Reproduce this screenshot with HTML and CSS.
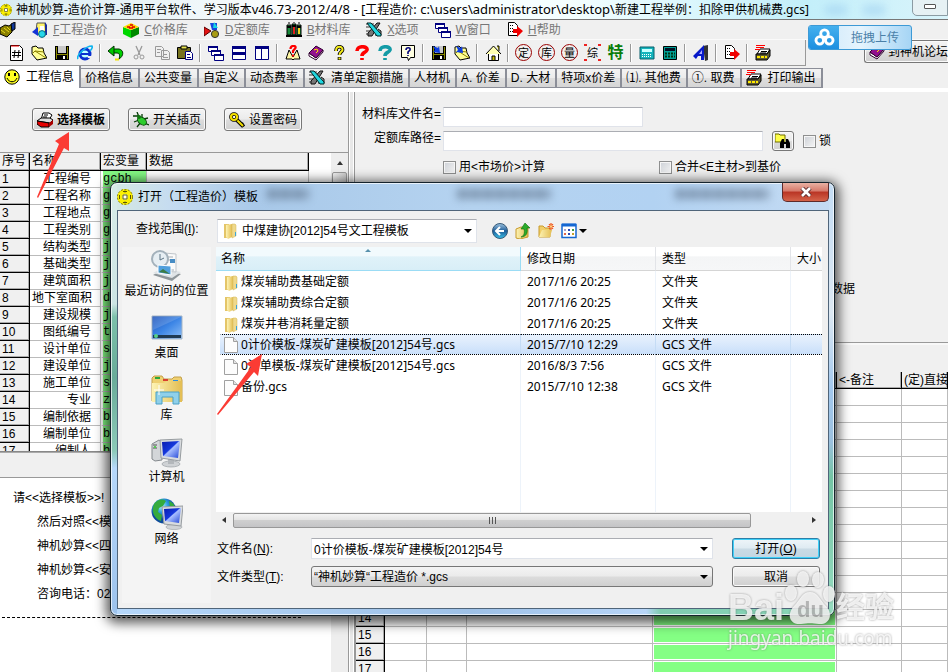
FILE: index.html
```html
<!DOCTYPE html>
<html lang="zh-CN">
<head>
<meta charset="utf-8">
<title>神机妙算-造价计算</title>
<link rel="stylesheet" href="styles.css">
</head>
<body>
<svg class="sprite" aria-hidden="true">
  <defs>
    <linearGradient id="gf" x1="0" x2="1"><stop offset="0" stop-color="#fdf3b4"/><stop offset="1" stop-color="#e3bd52"/></linearGradient>
    <linearGradient id="gs" x1="0" x2="1" y2="1"><stop offset="0" stop-color="#0a1cae"/><stop offset=".45" stop-color="#1538dc"/><stop offset=".5" stop-color="#a9bfff"/><stop offset="1" stop-color="#2346d6"/></linearGradient>
    <linearGradient id="gd" x1="0" x2="1" y2="1"><stop offset="0" stop-color="#1b50b8"/><stop offset=".5" stop-color="#3d86e6"/><stop offset="1" stop-color="#8fc0f7"/></linearGradient>
    <radialGradient id="gg" cx=".4" cy=".3"><stop offset="0" stop-color="#b6f4ff"/><stop offset=".5" stop-color="#2b9fe0"/><stop offset="1" stop-color="#0c4a9c"/></radialGradient>
    <linearGradient id="gb" y2="1" x2="0"><stop offset="0" stop-color="#9fc4e0"/><stop offset=".5" stop-color="#1d5c98"/><stop offset="1" stop-color="#39c0e6"/></linearGradient>
  </defs>
  <symbol id="coin" viewBox="0 0 16 16"><circle cx="8" cy="8" r="5.4" fill="none" stroke="#fbf000" stroke-width="5"/><circle cx="8" cy="8" r="7.6" fill="none" stroke="#5f5a00" stroke-width=".8" stroke-dasharray="2 1.5"/><path d="M6 6h4v4H6z" fill="#fff" stroke="#6b6500"/><path d="M6 2.500h4M8 1.500v2M6 13.500h4M8 12.500v2M2.500 6v4M13.500 6v4" stroke="#5d5900"/></symbol>
  <symbol id="shake" viewBox="0 0 16 16"><path d="M0 6l5-3 4 1 3-2v8l-5 5-7-3z" fill="#8a8000" stroke="#000"/><path d="M11 2l4-2v7l-3 2z" fill="#123a9b" stroke="#000"/><path d="M1 8l4 3M4 6l5 4M7 5l3 3" stroke="#e8d91c"/></symbol>
  <symbol id="proj" viewBox="0 0 16 16"><path d="M5 1h8l1 12H7l-3-4z" fill="#fff36b" stroke="#555"/><path d="M8 4h4v6H8z" fill="#fff"/><path d="M0 10l6-5v9z" fill="#1533d6"/><path d="M13 0l2 3v10h-2z" fill="#1c2e9c"/><circle cx="10" cy="12" r="3.4" fill="#27d7e8" stroke="#0b6a80"/></symbol>
  <symbol id="cube" viewBox="0 0 16 16"><path d="M0 5l8 3v8l-8-4z" fill="#00d800"/><path d="M16 5L8 8v8l8-4z" fill="#008a00"/><path d="M0 5l8-4 8 4-8 3z" fill="#ffd800"/><path d="M4 5h3M9 5h3M7 3h3M6 6h4" stroke="#e00000" stroke-width="1.6"/></symbol>
  <symbol id="shapes" viewBox="0 0 16 16"><path d="M0 5l7 4-7 5z" fill="#e31212" stroke="#500"/><path d="M6 1h7v7H8z" fill="#1747e0"/><path d="M10 0l4 6h-5z" fill="#15d6e0"/><circle cx="11" cy="12" r="3.6" fill="#a79b13" stroke="#333"/></symbol>
  <symbol id="books" viewBox="0 0 16 16"><path d="M1 3h4v10H1zM6 2h4v11H6zM11 3h4v10h-4z" stroke="#000" fill="#178a3a"/><path d="M7 3h2v9H7z" fill="#e51c1c"/><path d="M12 4h2v8h-2z" fill="#f0d020"/><path d="M1 5h4M6 4h4M11 5h4M0 14h16" stroke="#000" stroke-width="2"/><path d="M2 1h2M7 0h2M12 1h2" stroke="#000"/></symbol>
  <symbol id="excel" viewBox="0 0 16 16"><path d="M0 2h8M0 5h5M0 9h4M0 12h3" stroke="#333"/><path d="M14 1h-3L2 11v3h4z" fill="#777" stroke="#111"/><path d="M9 13h6V9l-3-2" fill="#999" stroke="#111"/><path d="M1 1h4l10 11v2h-4z" fill="#20d6df" stroke="#022"/></symbol>
  <symbol id="wins" viewBox="0 0 16 16"><g fill="#fff" stroke="#000080"><path d="M.5 1.500h9v5h-9zM3.500 5.500h9v5h-9zM6.500 9.500h9v6h-9z"/><path d="M0 2h10M3 6h10M6 10h10" stroke-width="2"/></g></symbol>
  <symbol id="exit" viewBox="0 0 16 16"><path d="M1.500.5h6l3 3v10h-9z" fill="#fff" stroke="#000"/><path d="M3 3.500h3M3 6.500h3M3 9.500h4" stroke="#000" stroke-dasharray="1 1"/><path d="M6 7h4V4l6 5-6 6v-4H6z" fill="#f00000"/></symbol>
  <symbol id="new" viewBox="0 0 16 16"><path d="M2.500.5h9l3 3v12h-12z" fill="#fff" stroke="#000"/><path d="M3 1h8" stroke="red"/><path d="M7 5L6 13M11 5l-1 8M4 7.500h9M4 10.500h9" stroke="#000"/></symbol>
  <symbol id="open" viewBox="0 0 16 16"><path d="M1 2l4-1 2 2h5l1 5 3 5-10 2-5-6z" fill="#ffff95" stroke="#000"/><path d="M2 8l2-2 11 7M4 6l9 1" fill="none" stroke="#8b8200"/></symbol>
  <symbol id="save" viewBox="0 0 16 16"><path d="M1 1h14v14H1z" fill="#000"/><path d="M2 2h1v12H2zM13 2h1v12h-1z" fill="#8b8a00"/><path d="M4 1h8v7H4z" fill="#c8c8c8"/><path d="M3 9h10v1H3z" fill="#8b8a00"/><path d="M9 11h2v3H9z" fill="#fff"/></symbol>
  <symbol id="ie" viewBox="0 0 16 16"><circle cx="8" cy="9" r="5" fill="#bff" stroke="#0a2fd0" stroke-width="3"/><path d="M4 9h9" stroke="#0a2fd0" stroke-width="2"/><path d="M1 14C-1 11 8 1 15 1c1 2-1 4-2 5" fill="none" stroke="#0fb4ee" stroke-width="1.600"/><path d="M10 11h6v2h-5z" fill="#efefef"/></symbol>
  <symbol id="undo" viewBox="0 0 16 16"><path d="M4 4h7c5 1 5 7 0 10 1-3 1-6-2-6H4" fill="#00d000" stroke="#003000"/><path d="M0 6l6-5v10z" fill="#00c800" stroke="#003000"/><path d="M7 14.500h4" stroke="#f2e200" stroke-width="2"/></symbol>
  <symbol id="cut" viewBox="0 0 16 16"><path d="M5 1l4 9M11 1L7 10" stroke="#999" stroke-width="1.300"/><circle cx="5" cy="12" r="2" fill="none" stroke="#999"/><circle cx="11" cy="12" r="2" fill="none" stroke="#999"/></symbol>
  <symbol id="copy" viewBox="0 0 16 16"><path d="M1.500 1.500h6l2 2v8h-8zM7.500 5.500h6l2 2v7h-8z" fill="#f0f0f0" stroke="#999"/><path d="M3 4.500h4M3 7.500h3M9 9.500h4M9 12.500h5" stroke="#999"/></symbol>
  <symbol id="paste" viewBox="0 0 16 16"><path d="M.5 2.500h13v11H.5z" fill="#77731e" stroke="#000"/><path d="M4 1h6v3H4z" fill="#e9e54f" stroke="#000"/><path d="M8.500 6.500h5l2 2v6h-7z" fill="#fff" stroke="#000080"/><path d="M10 9.500h3M10 12.500h4" stroke="#000080"/></symbol>
  <symbol id="hor" viewBox="0 0 16 16"><path d="M1.500 1.500h13v13h-13z" fill="#fff" stroke="#000080"/><path d="M1 2.500h14M1 8.500h14" stroke="#000080" stroke-width="3"/></symbol>
  <symbol id="ver" viewBox="0 0 16 16"><path d="M1.500 1.500h13v13h-13zM7.500 1v13" fill="#fff" stroke="#000080"/><path d="M1 2.500h14" stroke="#000080" stroke-width="3"/></symbol>
  <symbol id="bookq" viewBox="0 0 16 16"><path d="M1 14L4 5l4 7 4-7 3 9H9l-1 1-1-1z" fill="#fff7a5" stroke="#000"/><path d="M5.500 4c0-4 6-4 5-1L8 6v2M8 9.500v2" fill="none" stroke="#f00" stroke-width="2.200"/></symbol>
  <symbol id="pbook" viewBox="0 0 16 16"><path d="M1 8v3l7 4 7-8V5l-7 8z" fill="#fff" stroke="#300030"/><path d="M1 8l7-7 7 4-7 8z" fill="#93108e" stroke="#300030"/><path d="M6 5l3-1 1 2-2 2" stroke="#ffe600" fill="none"/></symbol>
  <symbol id="q" viewBox="0 0 16 16"><path d="M5 6c0-6 7-5 6.500-1-.5 2-3 2-3 5M8.500 12v3" fill="none" stroke="#000" stroke-width="3.600"/><path d="M5 6c0-6 7-5 6.500-1-.5 2-3 2-3 5M8.500 12.500v2" fill="none" stroke="currentColor" stroke-width="2"/></symbol>
  <symbol id="qbig" viewBox="0 0 16 16"><path d="M3 6c0-6 11-5 10-1-1 3-5 2-5 6M8 13v2" fill="none" stroke="currentColor" stroke-width="3.600"/></symbol>
  <symbol id="qbox" viewBox="0 0 16 16"><path d="M1.500.5h13v12h-4l-2 3-1-3h-6z" fill="#ffffe1" stroke="#000"/><path d="M6 5c0-3 5-3 4 0L8 7v2M8 10v1" fill="none" stroke="#00007a" stroke-width="1.600"/></symbol>
  <symbol id="down" viewBox="0 0 16 16"><path d="M2 1l5 2 1-2 1 7-7-1 2-2z" fill="#0d3de0"/></symbol>
  <symbol id="home" viewBox="0 0 16 16"><path d="M3.500 8v7.500h10V8" fill="#fff" stroke="#000"/><path d="M1 9l7.500-8L16 9" fill="#ffffb0" stroke="#000"/><path d="M12 1h2v5M7 15v-4h3v4" fill="#cfc500" stroke="#000"/></symbol>
  <symbol id="cd" viewBox="0 0 16 16"><path d="M1 2h14v12H1z" fill="#14b4bc" stroke="#065f6a"/><path d="M3 4h10v3H3z" fill="#c6ffff"/><path d="M3 9.500h10M3 11.500h10" stroke="#fff" stroke-dasharray="1 1"/></symbol>
  <symbol id="calc" viewBox="0 0 16 16"><path d="M1.500 1.500h13v13h-13z" fill="#00a097" stroke="#000"/><path d="M3 3h10v3H3z" fill="#012"/><path d="M3 8.500h10M3 11.500h10" stroke="#031" stroke-width="2" stroke-dasharray="2 1"/></symbol>
  <symbol id="ltr" viewBox="0 0 16 16"><path d="M10 1l5-1v15l-3 1z" fill="#333"/><path d="M0 11L11 0v15H8v-4H5l-2 3z" fill="#0719c9"/><path d="M6 9l3-4v4z" fill="#aaf"/></symbol>
  <symbol id="print" viewBox="0 0 16 16"><path d="M5 4h10l-3 5H2z" fill="#fff" stroke="#000"/><path d="M1 9h11l3-4v6l-3 4H1z" fill="#5d5936" stroke="#000"/><path d="M2 12h10" stroke="#ffe900" stroke-width="2" stroke-dasharray="3 1"/><path d="M1 .5h9M1 2.500h8M0 4.500h5" stroke="#f00"/><path d="M6 6.500h6M5 8h6" stroke="#000"/></symbol>
  <symbol id="smile" viewBox="0 0 16 16"><circle cx="8" cy="8" r="7.200" fill="#ffff22" stroke="#000"/><path d="M5 4v3M11 4v3" stroke="#000" stroke-width="2"/><path d="M3 9c2 5 8 5 10 0" fill="none" stroke="#000"/></symbol>
  <symbol id="redp" viewBox="0 0 16 16"><path d="M6 1h6l3 2-3 5H4z" fill="#fff" stroke="#000"/><path d="M0 9l4-3h9l3 2-3 3z" fill="#ddd" stroke="#000"/><path d="M0 9l12 2v4H4l-4-3z" fill="#e60000" stroke="#000"/><path d="M12 11l4-3v4l-4 3z" fill="#a00"/><path d="M7 3h4M6 5h4" stroke="#000"/></symbol>
  <symbol id="bug" viewBox="0 0 16 16"><path d="M0 4h5l2 3M4 0l2 5M9 2v4M15 6l-4 1M1 10l5-2M4 15l4-5M16 13l-5-2" stroke="#063b06" stroke-width="1.300" fill="none"/><ellipse cx="9" cy="9" rx="5" ry="3.400" transform="rotate(40 9 9)" fill="#2ccc2c" stroke="#064a06"/><circle cx="6" cy="5" r="2" fill="#117711"/></symbol>
  <symbol id="key" viewBox="0 0 16 16"><path d="M7 7l7 7M10 12l2-2M12 14l3-2" stroke="#000" stroke-width="4"/><path d="M7 7l7 7" stroke="#f4df00" stroke-width="2"/><circle cx="5" cy="5" r="3" fill="#fff" stroke="#000" stroke-width="3.600"/><circle cx="5" cy="5" r="3" fill="none" stroke="#f4df00" stroke-width="2.200"/></symbol>
  <symbol id="bino" viewBox="0 0 16 16"><path d="M0 1h4l1 1h5v7H0z" fill="#ffff4a" stroke="#6d6a00"/><path d="M5 15v-5l2-4h2v3h2V6h2l2 4v5h-4v-4h-2v4z" fill="#000"/></symbol>
  <symbol id="folder" viewBox="0 0 16 16"><path d="M2 1h5v14H2z" fill="#e4c568"/><path d="M4 2l6-1v13l-4 2-2-2z" fill="url(#gf)"/><path d="M10 1h3l1 1v11l-4 2z" fill="#efd98c" stroke="#d3b455" stroke-width=".5"/><path d="M13 9h1v4h-1z" fill="#3aa4d8"/></symbol>
  <symbol id="doc" viewBox="0 0 16 16"><path d="M1.500.5h9l4 4v11h-13z" fill="#fcfcfc" stroke="#a0a0a0"/><path d="M10.500.5v4h4" fill="#e3e3e3" stroke="#a0a0a0"/></symbol>
  <symbol id="back" viewBox="0 0 16 16"><circle cx="8" cy="8" r="7.500" fill="url(#gb)" stroke="#375a78"/><path d="M12 8H5M8 4L4 8l4 4" fill="none" stroke="#fff" stroke-width="2"/></symbol>
  <symbol id="up" viewBox="0 0 16 16"><path d="M1 6l5-2 7 1v9l-8 2-4-1z" fill="url(#gf)" stroke="#c89b2d"/><path d="M6 14c3-1 4-4 3-8H6l4-6 5 5h-3c1 5-1 9-6 9z" fill="#2cab2c" stroke="#0b6e0b" stroke-width=".6"/></symbol>
  <symbol id="nf" viewBox="0 0 16 16"><path d="M1 3h4l2 2h5v9H1z" fill="#f1cf69" stroke="#c89b2d"/><path d="M1 14l3-7h10l-2 7z" fill="url(#gf)"/><path d="M13 0v7M9.500 3.500h6.500M11 1l4 5M15 1l-4 5" stroke="#ef5418" stroke-width="1.200"/><circle cx="13" cy="3.500" r="1.200" fill="#ffd080"/></symbol>
  <symbol id="view" viewBox="0 0 16 16"><path d="M1 1.500h14v13H1z" fill="#fff" stroke="#1467d2" stroke-width="1.500"/><path d="M1 2h14" stroke="#1467d2" stroke-width="3"/><path d="M3 7h2" stroke="#a99fc8" stroke-width="2"/><path d="M3 11h2" stroke="#e2694a" stroke-width="2"/><path d="M7 7h2M7 11h2" stroke="#2a49b5" stroke-width="2"/><path d="M11 7h2" stroke="#3b9a42" stroke-width="2"/><path d="M11 11h2" stroke="#c6a02a" stroke-width="2"/></symbol>
  <symbol id="p-recent" viewBox="0 0 32 32"><path d="M2 25l9-5 19 4-9 7z" fill="#8d9599"/><path d="M2 23l9-5 19 4-9 6z" fill="#dfe4e7"/><path d="M13 3l12 1v18l-12-1z" fill="#fafafa" stroke="#bfc5ca"/><path d="M15 7h7M15 10h4M15 20h8" stroke="#a3adb5"/><path d="M19 9h5v4h-5z" fill="#478cc4"/><circle cx="9" cy="9" r="8" fill="#e6eef3" stroke="#a3b1bb" stroke-width="2"/><path d="M9 4v6l4-2" fill="none" stroke="#5c7485"/><path d="M7 15l13 1v9L7 23z" fill="#4f9fdd" stroke="#fff"/><path d="M8 22l4-3 7 5z" fill="#3b7c46"/></symbol>
  <symbol id="p-desk" viewBox="0 0 32 32"><path d="M1 4h30v23H1z" fill="url(#gd)" stroke="#a6b5c4"/><path d="M2 23h28v3H2z" fill="#203a52"/><circle cx="5" cy="24" r="2" fill="#55d08a"/><path d="M2 5h28L2 18z" fill="#fff" opacity=".15"/></symbol>
  <symbol id="p-lib" viewBox="0 0 32 32"><path d="M1 4l2-2h8l2 3h8l2-2h7l1 3v21H1z" fill="#efd071" stroke="#c4a04a"/><path d="M4 3h5v2H4z" fill="#2ca83b"/><path d="M12 5h5v2h-5z" fill="#d8402f"/><path d="M22 6h5v2h-5z" fill="#2c8de0"/><path d="M1 9h12l3-2h15v21H1z" fill="url(#gf)"/><path d="M5 30V18h23v12h-6v-7H11v7z" fill="#8fd0ea" stroke="#4ba0c6"/><path d="M8 11v10M3 16h10" stroke="#fff"/></symbol>
  <symbol id="p-comp" viewBox="0 0 32 32"><path d="M1 8l7-4 3 2v18l-7 1-3-2z" fill="#d3d6d9" stroke="#84898d"/><path d="M2 9h4M2 12h4" stroke="#555"/><path d="M3 10h2v2H3z" fill="#5c5"/><ellipse cx="20" cy="28" rx="9" ry="3" fill="#cfd2d5" stroke="#9a9fa3" stroke-width=".7"/><path d="M17 22h6v6h-6z" fill="#b3b7bb"/><path d="M9 4l22-1-2 22-19-3z" fill="#d9dcdf" stroke="#979ca0"/><path d="M11 6l18-1-2 17-15-2z" fill="url(#gs)"/></symbol>
  <symbol id="p-net" viewBox="0 0 32 32"><circle cx="13" cy="13" r="12.500" fill="url(#gg)"/><path d="M3 6c4-6 10-5 12-3l-3 5-4 2-1 4 4 3-1 6C3 21 0 13 3 6zM18 3c5 2 6 5 6 7l-5-1z" fill="#35ab3d"/><ellipse cx="23" cy="29" rx="8" ry="2.600" fill="#d0d3d6" stroke="#9a9fa3" stroke-width=".6"/><path d="M11 9l21-1-2 20-17-2z" fill="#d9dcdf" stroke="#979ca0"/><path d="M13 11l17-1-2 15-14-2z" fill="url(#gs)"/></symbol>
</svg>

<div class="app">
  <header class="titlebar">
    <svg class="ic"><use href="#coin"/></svg>
    <h1>神机妙算-造价计算-通用平台软件、学习版本<span class="latin">v46.73-2012/4/8 - [</span>工程造价<span class="latin">: c:\users\administrator\desktop\</span>新建工程举例：扣除甲供机械费.gcs]</h1>
    <span class="haze"></span>
    <button class="minimize" aria-label="最小化"><span></span></button>
  </header>

  <nav class="menubar">
    <svg class="ic lead"><use href="#shake"/></svg>
    <a href="#"><svg class="ic"><use href="#proj"/></svg><span><u>F</u>工程造价</span></a>
    <a href="#"><svg class="ic"><use href="#cube"/></svg><span><u>C</u>价格库</span></a>
    <a href="#"><svg class="ic"><use href="#shapes"/></svg><span><u>D</u>定额库</span></a>
    <a href="#"><svg class="ic"><use href="#books"/></svg><span><u>B</u>材料库</span></a>
    <a href="#"><svg class="ic"><use href="#excel"/></svg><span><u>X</u>选项</span></a>
    <a href="#"><svg class="ic"><use href="#wins"/></svg><span><u>W</u>窗口</span></a>
    <a href="#"><svg class="ic"><use href="#exit"/></svg><span><u>H</u>帮助</span></a>
  </nav>

  <div class="toolrow">
    <div class="toolbar">
      <button aria-label="新建"><svg class="ic"><use href="#new"/></svg></button>
      <button aria-label="打开"><svg class="ic"><use href="#open"/></svg></button>
      <button aria-label="保存"><svg class="ic"><use href="#save"/></svg></button>
      <button aria-label="网络"><svg class="ic"><use href="#ie"/></svg></button>
      <i></i>
      <button aria-label="撤销"><svg class="ic"><use href="#undo"/></svg></button>
      <button aria-label="剪切"><svg class="ic"><use href="#cut"/></svg></button>
      <button aria-label="复制"><svg class="ic"><use href="#copy"/></svg></button>
      <button aria-label="粘贴"><svg class="ic"><use href="#paste"/></svg></button>
      <i></i>
      <button aria-label="层叠"><svg class="ic"><use href="#wins"/></svg></button>
      <button aria-label="横排"><svg class="ic"><use href="#hor"/></svg></button>
      <button aria-label="竖排"><svg class="ic"><use href="#ver"/></svg></button>
      <i></i>
      <button aria-label="教程"><svg class="ic"><use href="#bookq"/></svg></button>
      <button aria-label="手册"><svg class="ic"><use href="#pbook"/></svg></button>
      <button aria-label="提示" class="yellow"><svg class="ic"><use href="#q"/></svg></button>
      <button aria-label="疑问" class="red"><svg class="ic"><use href="#qbig"/></svg></button>
      <button aria-label="问答" class="teal"><svg class="ic"><use href="#qbig"/></svg></button>
      <button aria-label="说明"><svg class="ic"><use href="#qbox"/></svg></button>
      <i></i>
      <button aria-label="存入"><svg class="ic"><use href="#save"/><use href="#down"/></svg></button>
      <button aria-label="取出"><svg class="ic"><use href="#open"/><use href="#down"/></svg></button>
      <i></i>
      <button aria-label="主页"><svg class="ic"><use href="#home"/></svg></button>
      <i></i>
      <button class="seal">定</button>
      <button class="seal">库</button>
      <button class="seal">量</button>
      <button class="seal corners">综</button>
      <button class="seal green">特</button>
      <i></i>
      <button aria-label="计算"><svg class="ic"><use href="#cd"/></svg></button>
      <button aria-label="计算器"><svg class="ic"><use href="#calc"/></svg></button>
      <i></i>
      <button aria-label="字体"><svg class="ic"><use href="#ltr"/></svg></button>
      <i></i>
      <button aria-label="退出"><svg class="ic"><use href="#exit"/></svg></button>
      <i></i>
      <button aria-label="打印"><svg class="ic"><use href="#print"/></svg></button>
    </div>
    <button class="btn forum"><svg class="ic"><use href="#pbook"/></svg>到神机论坛</button>
  </div>

  <nav class="tabs">
    <button class="active"><svg class="ic"><use href="#smile"/></svg>工程信息</button>
    <button>价格信息</button>
    <button>公共变量</button>
    <button>自定义</button>
    <button>动态费率</button>
    <button><svg class="ic"><use href="#excel"/></svg>清单定额措施</button>
    <button>人材机</button>
    <button>A. 价差</button>
    <button>D. 大材</button>
    <button>特项x价差</button>
    <button>⑴. 其他费</button>
    <button>①. 取费</button>
    <button><svg class="ic"><use href="#print"/></svg>打印输出</button>
  </nav>

  <main class="work">
    <section class="left">
      <div class="actions">
        <button class="btn strong"><svg class="ic"><use href="#redp"/></svg>选择模板</button>
        <button class="btn"><svg class="ic"><use href="#bug"/></svg>开关插页</button>
        <button class="btn"><svg class="ic"><use href="#key"/></svg>设置密码</button>
      </div>
      <div class="infobox">
        <table class="info">
          <thead><tr><th class="c1">序号</th><th class="c2">名称</th><th class="c3">宏变量</th><th class="c4">数据</th></tr></thead>
          <tbody id="info-rows"></tbody>
        </table>
        <div class="vbar"><span class="caret-up"></span><span class="thumb"></span></div>
      </div>
      <div class="gap"></div>
      <div class="notes">
        <div class="lines">
          <p>请&lt;&lt;选择模板&gt;&gt;!</p>
          <p class="in">然后对照&lt;&lt;模</p>
          <p class="in">神机妙算&lt;&lt;四</p>
          <p class="in">神机妙算&lt;&lt;安</p>
          <p class="in">咨询电话：02</p>
          <div class="rule"></div>
        </div>
        <div class="track"></div>
      </div>
    </section>
    <div class="splitter"></div>
    <section class="right">
      <form class="settings">
        <div class="row"><label for="lib">材料库文件名=</label><input id="lib" class="short" type="text"></div>
        <div class="row"><label for="path">定额库路径=</label><input id="path" class="long" type="text"><button type="button" class="btn find" aria-label="查找"><svg class="ic"><use href="#bino"/></svg></button><span class="check"><input id="lock" type="checkbox"><label for="lock">锁</label></span></div>
        <div class="row checks"><span class="check"><input id="mk" type="checkbox"><label for="mk">用&lt;市场价&gt;计算</label></span><span class="check"><input id="zc" type="checkbox"><label for="zc">合并&lt;E主材&gt;到基价</label></span></div>
        <p class="data">数据</p>
      </form>
      <div class="band"></div>
      <table class="grid">
        <thead><tr><th class="g0"></th><th class="g1"></th><th class="g2"></th><th class="g3"></th><th class="g4"></th><th class="g5">&lt;-备注</th><th>(定)直接</th></tr></thead>
        <tbody id="grid-rows"></tbody>
      </table>
    </section>
  </main>

  <button class="upload"><span class="cloud"><svg viewBox="0 0 22 20"><g fill="none" stroke="#fff" stroke-width="3"><circle cx="11" cy="6" r="4"/><circle cx="6" cy="13" r="4"/><circle cx="16" cy="13" r="4"/></g></svg></span><span class="uptext">拖拽上传</span></button>

  <div class="dialog" role="dialog" aria-label="打开模板">
    <div class="dtitle"><svg class="ic"><use href="#coin"/></svg><h2>打开（工程造价）模板</h2><span class="ghost g-a"></span><span class="ghost g-b"></span><span class="ghost g-c"></span>
      <button class="close" aria-label="关闭"><svg viewBox="0 0 12 10"><path d="M2 1l8 8M10 1L2 9" stroke="#5b2c2c" stroke-width="4.500"/><path d="M2 1l8 8M10 1L2 9" stroke="#fff" stroke-width="2.600"/></svg></button>
    </div>
    <div class="dbody">
      <div class="lookin">
        <label for="look">查找范围(<u>I</u>):</label>
        <div class="combo look"><svg class="ic"><use href="#folder"/></svg><select id="look"><option>中煤建协[2012]54号文工程模板</option></select><span class="tri"></span></div>
        <div class="navicons">
          <button aria-label="后退"><svg class="ic"><use href="#back"/></svg></button>
          <button aria-label="向上"><svg class="ic"><use href="#up"/></svg></button>
          <button aria-label="新建文件夹"><svg class="ic"><use href="#nf"/></svg></button>
          <button aria-label="视图" class="viewb"><svg class="ic"><use href="#view"/></svg><span class="tri"></span></button>
        </div>
      </div>
      <div class="dmain">
        <aside class="places">
          <a href="#"><svg><use href="#p-recent"/></svg>最近访问的位置</a>
          <a href="#"><svg><use href="#p-desk"/></svg>桌面</a>
          <a href="#"><svg><use href="#p-lib"/></svg>库</a>
          <a href="#"><svg><use href="#p-comp"/></svg>计算机</a>
          <a href="#"><svg><use href="#p-net"/></svg>网络</a>
        </aside>
        <div class="dcol">
          <div class="list">
            <table class="files">
              <thead><tr><th class="f1">名称<span class="sort"></span></th><th class="f2">修改日期</th><th class="f3">类型</th><th>大小</th></tr></thead>
              <tbody>
                <tr><td><svg class="ic"><use href="#folder"/></svg>煤炭辅助费基础定额</td><td>2017/1/6 20:25</td><td>文件夹</td><td></td></tr>
                <tr><td><svg class="ic"><use href="#folder"/></svg>煤炭辅助费综合定额</td><td>2017/1/6 20:25</td><td>文件夹</td><td></td></tr>
                <tr><td><svg class="ic"><use href="#folder"/></svg>煤炭井巷消耗量定额</td><td>2017/1/6 20:25</td><td>文件夹</td><td></td></tr>
                <tr class="sel"><td><svg class="ic"><use href="#doc"/></svg>0计价模板-煤炭矿建模板[2012]54号.gcs</td><td>2015/7/10 12:29</td><td>GCS 文件</td><td></td></tr>
                <tr><td><svg class="ic"><use href="#doc"/></svg>0清单模板-煤炭矿建模板[2012]54号.gcs</td><td>2016/8/3 7:56</td><td>GCS 文件</td><td></td></tr>
                <tr><td><svg class="ic"><use href="#doc"/></svg>备份.gcs</td><td>2015/7/10 12:38</td><td>GCS 文件</td><td></td></tr>
                <tr class="fill"><td></td><td></td><td></td><td></td></tr>
              </tbody>
            </table>
            <div class="hbar"><span class="al"></span><span class="hthumb"><i></i><i></i><i></i></span><span class="ar"></span></div>
          </div>
          <div class="fields">
            <label for="fn">文件名(<u>N</u>):</label>
            <div class="combo"><input id="fn" type="text" value="0计价模板-煤炭矿建模板[2012]54号"><span class="tri"></span></div>
            <button class="btn ok">打开(<u>O</u>)</button>
            <label for="ft">文件类型(<u>T</u>):</label>
            <div class="combo drop"><select id="ft"><option>“神机妙算“工程造价 *.gcs</option></select><span class="tri"></span></div>
            <button class="btn cancel">取消</button>
          </div>
        </div>
      </div>
    </div>
  </div>

  <svg class="arrow a1" viewBox="0 0 34 68"><path d="M33 1L19 10l4 3L1 66l1 1 26-50 5 3z" fill="#fb3b34"/></svg>
  <svg class="arrow a2" viewBox="0 0 48 62"><path d="M46 0L30 10l5 3L1 60l1 1 36-43 4 4z" fill="#fb3b34"/></svg>

  <div class="mark">
    <div class="brand"><span>Bai</span><svg viewBox="0 0 50 56"><g fill="#fff"><ellipse cx="6" cy="23" rx="6" ry="8"/><ellipse cx="18" cy="9" rx="6" ry="8"/><ellipse cx="33" cy="10" rx="6" ry="8"/><ellipse cx="44" cy="24" rx="6" ry="8"/><path d="M25 22c8 0 10 8 16 14 8 9 3 19-7 18-7-1-11-1-18 0-11 1-15-9-7-18 6-6 8-14 16-14z"/></g><text x="12" y="47">du</text></svg><span class="cn">经验</span></div>
    <div class="site">jingyan.baidu.com</div>
  </div>
</div>
<script src="rows.js"></script>
</body>
</html>
```
FILE: styles.css
```css
* { box-sizing: border-box; }
html, body { margin: 0; height: 100%; }
body { font: 12px/14px "Liberation Sans", "Noto Sans CJK SC", sans-serif; color: #000; background: #f0f0f0; overflow: hidden; }
button, input, select { font: inherit; color: inherit; margin: 0; }
button { padding: 0; border: 0; background: none; }
h1, h2, p { margin: 0; font-size: 12px; font-weight: 400; }
a { color: inherit; text-decoration: none; }
.sprite { position: absolute; width: 0; height: 0; }
.ic { width: 16px; height: 16px; flex: none; display: block; }
.app { position: relative; height: 100vh; display: flex; flex-direction: column; overflow: hidden; }

.titlebar { flex: 0 0 20px; display: flex; align-items: center; background: linear-gradient(90deg, #d9ecf2, #fff 35%, #f4ffff 60%, #c3effa 85%, #d9f4fb); border-bottom: 1px solid #777; overflow: hidden; }
.titlebar .ic { width: 12px; margin-right: 4px; }
.titlebar h1 { font-family: "Noto Sans", "Noto Sans CJK SC", sans-serif; white-space: nowrap; line-height: 18px; }
.latin { font-size: 13px; }
.haze { flex: 1; height: 10px; margin: 0 16px; background: repeating-linear-gradient(90deg, #9fd0f0 0 22px, transparent 22px 38px); filter: blur(4px); opacity: .6; }
.minimize { width: 36px; height: 19px; flex: none; align-self: flex-start; margin-top: -3px; border: 1px solid #8b9ba3; border-radius: 0 0 0 5px; background: #e6f1f4; display: flex; align-items: center; justify-content: center; }
.minimize span { width: 12px; height: 5px; border: 1px solid #555; background: #fff; border-radius: 1px; }

.menubar { flex: 0 0 20px; display: flex; align-items: center; gap: 16px; color: #777; border-bottom: 1px solid #fafafa; font-family: "Noto Sans", "Noto Sans CJK SC", sans-serif; white-space: nowrap; }
.menubar a { display: flex; align-items: center; gap: 5px; }

.toolrow { flex: 0 0 26px; display: flex; align-items: flex-start; }
.toolbar { flex: 0 1 808px; height: 26px; display: flex; align-items: center; padding-left: 4px; border-right: 1px solid #999; border-bottom: 1px solid #999; }
.toolbar button { flex: 0 0 23px; height: 22px; display: flex; align-items: center; justify-content: center; }
.toolbar i { flex: 0 0 8px; height: 18px; background: linear-gradient(90deg, transparent 3px, #999 3px 4px, #fff 4px 5px, transparent 5px); }
.yellow { color: #f3ea1a; }
.red { color: #f00; }
.teal { color: #139ba6; }
.toolbar .seal { flex: 0 0 17px; height: 17px; margin: 0 3px; border: 1px solid #900; border-radius: 50%; font-size: 11px; line-height: 14px; }
.toolbar .corners { border: 0; border-radius: 0; background: linear-gradient(#e22, #e22) 0 0 / 3px 2px no-repeat, linear-gradient(#e22, #e22) 100% 0 / 3px 2px no-repeat, linear-gradient(#e22, #e22) 0 100% / 3px 2px no-repeat, linear-gradient(#e22, #e22) 100% 100% / 3px 2px no-repeat; }
.toolbar .green { border: 0; color: #0a7d0a; font-size: 16px; font-weight: 700; }
.btn { display: flex; align-items: center; justify-content: center; border: 1px solid #777; border-radius: 3px; background: linear-gradient(#f4f4f4, #ebebeb 48%, #dcdcdc 52%, #d0d0d0); white-space: nowrap; box-shadow: inset 0 0 0 1px #fafafa; }
.forum { margin-left: 58px; flex: 1 0 auto; height: 23px; justify-content: flex-start; padding-left: 4px; gap: 3px; border-right: 0; border-radius: 3px 0 0 3px; }

.tabs { flex: 0 0 25px; display: flex; align-items: flex-end; border-bottom: 4px solid #fff; white-space: nowrap; }
.tabs button { height: 20px; display: flex; align-items: center; gap: 6px; padding: 0 5px 0 4px; border: 1px solid #8b8e98; border-width: 1px 2px 1px 0; background: linear-gradient(#f3f3f3, #ececec 48%, #dedede 52%, #d5d5d5); }
.tabs .active { height: 22px; background: #fff; border-left: 0; border-bottom: 0; border-top: 0; padding-right: 5px; }

.work { flex: 1; min-height: 0; display: flex; }
.left { flex: 0 0 348px; display: flex; flex-direction: column; min-height: 0; }
.actions { flex: 0 0 60px; display: flex; gap: 18px; padding: 16px 0 0 32px; }
.actions .btn { width: 78px; height: 23px; gap: 4px; }
.strong { font-weight: 700; }
.infobox { flex: 0 0 300px; display: flex; justify-content: space-between; background: #fff; border-top: 1px solid #999; border-bottom: 1px solid #888; overflow: hidden; }
.info { width: 309px; table-layout: fixed; border-collapse: separate; border-spacing: 0; align-self: flex-start; }
.info th, .info td { height: 17px; padding: 0 2px; line-height: 15px; white-space: nowrap; overflow: hidden; font-weight: 400; text-align: left; border-right: 1px solid #bbb; border-bottom: 1px solid #bbb; }
.info th, .info .num { background: #f0f0f0; border-right: 1px solid #000; border-bottom: 1px solid #000; box-shadow: inset -1px -1px 0 #aaa; }
.info th { height: 18px; }
.info .name { text-align: right; padding-right: 9px; }
.info .macro { background: #84f984; font-family: "Liberation Mono", monospace; border-left: 2px solid #fff; padding: 0; }
.c1 { width: 30px; } .c2 { width: 71px; } .c3 { width: 46px; }
.vbar { width: 17px; background: #eee; display: flex; flex-direction: column; align-items: center; }
.caret-up { margin: 8px 0 7px; border: 3px solid transparent; border-bottom: 4px solid #333; border-top: 0; }
.thumb { width: 15px; height: 40px; border: 1px solid #999; border-radius: 2px; background: linear-gradient(90deg, #f3f3f3, #ccc); }
.gap { flex: 0 0 26px; border-top: 1px solid #aaa; border-bottom: 1px solid #999; }
.notes { flex: 1; display: flex; background: #fff; white-space: nowrap; }
.lines { flex: 1; padding: 8px 0 0 13px; line-height: 24px; }
.in { padding-left: 24px; }
.rule { height: 12px; margin: 0 30px 0 -11px; border-bottom: 1px dashed #000; }
.track { width: 17px; background: #eee; }
.splitter { flex: 0 0 7px; border: 2px solid #999; border-width: 0 1px; background: #e8e8e8; box-shadow: inset 1px 0 #fff, inset -1px 0 #fff; }

.right { flex: 1; min-width: 0; display: flex; flex-direction: column; }
.settings { flex: 0 0 251px; padding-top: 15px; border-bottom: 1px solid #999; }
.row { display: flex; align-items: flex-start; height: 20px; margin-bottom: 4px; white-space: nowrap; }
.row > label { width: 86px; text-align: right; margin-right: 2px; }
.row input[type=text] { height: 20px; border: 1px solid #e0e3ea; border-top-color: #abadb3; background: #fff; }
.short { width: 200px; }
.long { width: 320px; margin-right: 9px; }
.find { width: 22px; height: 20px; margin-right: 9px; }
.check { display: flex; align-items: center; height: 20px; gap: 3px; }
.check input { appearance: none; width: 13px; height: 13px; border: 1px solid #8e8f8f; background: linear-gradient(135deg, #ccd0d6, #f5f5f5); box-shadow: inset 0 0 0 1px #f6f6f6; }
.row.checks { margin-top: 6px; padding-left: 88px; }
.checks .check:first-child { width: 216px; }
.data { margin: 105px 0 0 476px; }
.band { flex: 0 0 29px; border-top: 2px solid #f8f8f8; }
.grid { width: 100%; table-layout: fixed; border-collapse: separate; border-spacing: 0; background: #fff; border-left: 1px solid #999; }
.grid th, .grid td { height: 17px; padding: 0 2px; line-height: 15px; font-weight: 400; text-align: left; border-right: 1px solid #bbb; border-bottom: 1px solid #bbb; overflow: hidden; white-space: nowrap; }
.grid th, .grid .num { background: #f0f0f0; border-right: 1px solid #000; border-bottom: 1px solid #000; box-shadow: inset -1px -1px 0 #aaa; }
.grid .hot { background: #84ff84; box-shadow: inset 0 0 0 1px #fff; }
.g0 { width: 29px; } .g1 { width: 42px; } .g2 { width: 40px; } .g3 { width: 186px; } .g4 { width: 184px; } .g5 { width: 65px; }

.upload { position: absolute; left: 808px; top: 25px; width: 104px; height: 25px; display: flex; border: 1px solid #3d9ad6; border-radius: 3px; background: linear-gradient(90deg, #c8e6fa, #e6f4fd 50%, #a6d5f5); overflow: hidden; color: #4a7fa8; }
.cloud { width: 30px; height: 23px; background: linear-gradient(#44b0ee, #1d8fe0); display: flex; align-items: center; justify-content: center; }
.cloud svg { width: 21px; height: 19px; }
.uptext { flex: 1; line-height: 25px; text-align: center; }

.dialog { position: absolute; left: 110px; top: 182px; width: 725px; height: 434px; display: flex; flex-direction: column; padding: 0 5px 6px 6px; border: 1px solid #15232c; border-radius: 7px;
  background: linear-gradient(#d8ece8, #cde4e4 28%, #7cc0aa 31%, #69ac99 45%, #8ccab8 62%, #b6d8fb 66%, #9cc2ec) left / 6px 100% no-repeat, linear-gradient(#c3dcf4, #dce8f2 30%, #a2c8ee 48%, #9bc0de 60%, #74c4a4 68%, #96dcc0) right / 5px 100% no-repeat, linear-gradient(90deg, #b6d8fb, #9dc0e6 50%, #b7d5f8 74%, #7fcbb0 76%, #8ad8b8) bottom / 100% 6px no-repeat, linear-gradient(90deg, #d5e9e3, #c6dcf0 8%, #a9c9e9 20%, #b5d3f0 50%, #b2d2f2 75%, #c4dbf3);
  box-shadow: inset 0 0 0 1px rgba(255,255,255,.7), 0 3px 12px 4px rgba(0,0,0,.65); }
.dtitle { position: relative; flex: 0 0 27px; display: flex; align-items: center; gap: 5px; }
.dtitle h2, .places, .files { font-family: "Noto Sans", "Noto Sans CJK SC", sans-serif; }
.ghost { position: absolute; top: 6px; height: 10px; background: repeating-linear-gradient(90deg, #41536a 0 10px, #8297b0 10px 13px); filter: blur(4px); opacity: .5; }
.g-a { left: 150px; width: 42px; } .g-b { left: 340px; width: 94px; } .g-c { left: 558px; width: 94px; }
.close { position: absolute; right: 0; top: 0; width: 47px; height: 19px; border: 1px solid #5e2b2b; border-top: 0; border-radius: 0 0 5px 5px; background: linear-gradient(#e9b1a3, #d6796a 45%, #b93424 50%, #d4634a); display: flex; align-items: center; justify-content: center; }
.close svg { width: 12px; height: 10px; }
.dbody { flex: 1; min-height: 0; display: flex; flex-direction: column; background: #f0f0f0; border: 1px solid #50657a; padding: 8px 6px 5px 4px; }
.lookin { flex: 0 0 24px; display: flex; align-items: center; }
.lookin > label { width: 95px; padding-left: 14px; padding-bottom: 4px; white-space: nowrap; }
.combo { position: relative; display: flex; align-items: center; background: #fff; border: 1px solid #dfe3ea; border-top-color: #abadb3; height: 21px; }
.combo select, .combo input { appearance: none; flex: 1; min-width: 0; border: 0; background: none; padding: 0 2px; height: 100%; outline: 0; }
.tri { flex: none; border: 4px solid transparent; border-top: 4px solid #000; border-bottom: 0; margin-right: 4px; }
.look { flex: 0 0 260px; height: 24px; }
.look .ic { margin: 0 2px 0 4px; }
.navicons { display: flex; gap: 7px; margin-left: 15px; }
.navicons .viewb { display: flex; align-items: center; gap: 2px; }
.dmain { flex: 1; min-height: 0; display: flex; gap: 5px; padding-top: 4px; }
.places { flex: 0 0 89px; background: #f4f4f4; padding-top: 3px; }
.places a { display: flex; flex-direction: column; align-items: center; height: 62px; white-space: nowrap; line-height: 18px; }
.places svg { width: 32px; height: 32px; }
.dcol { flex: 1; min-width: 0; display: flex; flex-direction: column; }
.list { flex: 0 0 281px; display: flex; flex-direction: column; background: #fff; overflow: hidden; }
.files { width: 100%; height: 265px; table-layout: fixed; border-collapse: separate; border-spacing: 0; }
.files th { height: 24px; padding: 0 6px; text-align: left; font-weight: 400; background: linear-gradient(#fff 40%, #f4f5f6 42%, #f6f7f8); border-right: 1px solid #e2e4e8; border-bottom: 1px solid #d5d5d5; white-space: nowrap; overflow: hidden; position: relative; }
.files th:last-child { border-right: 0; padding-right: 0; }
.files .f1 { width: 305px; background: linear-gradient(#f2fafd 40%, #e0f2f9 42%, #d8eef7); border-color: #9bdcf5; padding-left: 5px; }
.f2 { width: 135px; } .f3 { width: 135px; }
.sort { position: absolute; left: 149px; top: 2px; border: 3px solid transparent; border-bottom: 3px solid #5891ad; border-top: 0; }
.files td { height: 21px; padding: 0 6px; border-right: 1px solid #edf3fa; white-space: nowrap; line-height: 19px; }
.files td:last-child { border-right: 0; }
.files td:first-child { padding-left: 7px; }
.files td .ic { display: inline-block; vertical-align: middle; margin-right: 2px; }
.files .sel td { background: linear-gradient(#e9f2fd, #c9dffa); border-top: 1px dotted #000; border-bottom: 1px dotted #000; border-right-color: #c5dcf5; line-height: 17px; }
.files .sel td:first-child { clip-path: inset(0 0 0 4px round 2px 0 0 2px); }
.files .fill td { height: auto; }
.hbar { flex: 0 0 16px; background: #f0f0f0; display: flex; align-items: center; justify-content: space-between; }
.hthumb { flex: 0 0 518px; height: 15px; margin-right: 54px; border: 1px solid #989898; border-radius: 2px; background: linear-gradient(#f3f3f3, #e4e4e4 45%, #cfcfcf 50%, #c4c4c6); display: flex; align-items: center; justify-content: center; gap: 2px; }
.hthumb i { width: 1px; height: 7px; background: #555; }
.al, .ar { border: 3px solid transparent; margin: 0 6px; }
.al { border-right: 4px solid #333; border-left: 0; }
.ar { border-left: 4px solid #333; border-right: 0; }
.fields { display: grid; grid-template-columns: 95px 402px 107px; row-gap: 7px; align-items: center; padding-top: 10px; }
.fields label { padding-left: 1px; white-space: nowrap; }
.fields .btn { width: 88px; height: 21px; margin-left: 19px; }
.fields .drop { border: 1px solid #777; border-radius: 3px; background: linear-gradient(#f4f4f4, #ebebeb 48%, #dcdcdc 52%, #d0d0d0); }
.fields .ok { border-color: #2c7fa8; box-shadow: inset 0 0 0 1px #3fd0f8; background: linear-gradient(#eef5f9, #dfebf2 48%, #cadbe5 52%, #c3d6e2); }

.arrow { position: absolute; }
.a1 { left: 36px; top: 131px; width: 34px; height: 68px; }
.a2 { left: 216px; top: 354px; width: 48px; height: 62px; }
.mark { position: absolute; left: 728px; top: 568px; color: rgba(255,255,255,.8); white-space: nowrap; filter: drop-shadow(0 0 1px rgba(90,90,90,.7)); }
.brand { display: flex; align-items: flex-end; height: 58px; font-size: 36px; line-height: 36px; font-weight: 700; }
.brand svg { width: 50px; height: 56px; opacity: .8; margin-left: 1px; }
.brand text { font: 700 22px "Liberation Sans", sans-serif; fill: #bbb; }
.brand .cn { font-size: 29px; margin-left: 1px; }
.site { font: 19px/24px "Noto Sans", sans-serif; }
```
FILE: rows.js
```js
const info = [
  ["工程编号", "gcbh"], ["工程名称", "g"], ["工程地点", "g"], ["工程类别", "g"],
  ["结构类型", "j"], ["基础类型", "j"], ["建筑面积", "j"], ["地下室面积", "d"],
  ["建设规模", "j"], ["图纸编号", "t"], ["设计单位", "s"], ["建设单位", "j"],
  ["施工单位", "s"], ["专业", "z"], ["编制依据", "b"], ["编制单位", "b"], ["编制人", "b"]
];
document.getElementById("info-rows").innerHTML = info.map(([name, code], i) =>
  `<tr><td class="num">${i + 1}</td><td class="name">${name}</td><td class="macro">${code}</td><td></td></tr>`).join("");
document.getElementById("grid-rows").innerHTML = Array.from({ length: 17 }, (_, i) =>
  `<tr><td class="num">${i + 1}</td><td></td><td></td><td></td><td class="hot"></td><td></td><td></td></tr>`).join("");
```
